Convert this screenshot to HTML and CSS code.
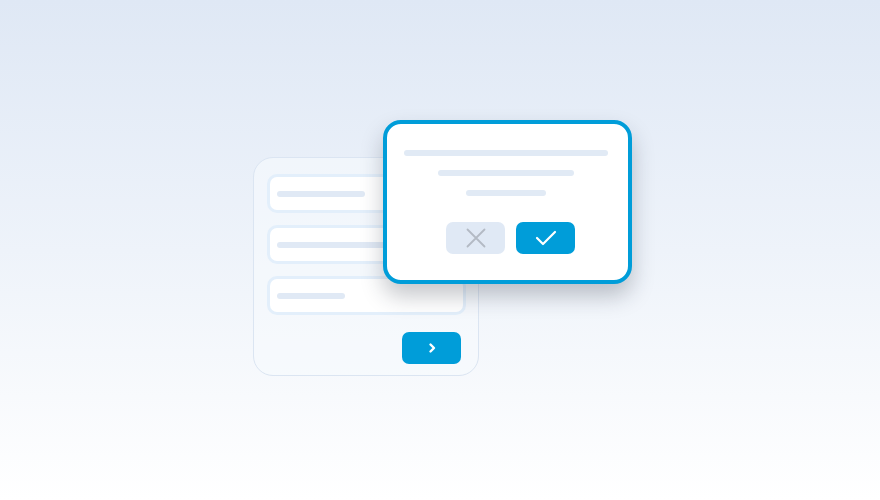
FILE: index.html
```html
<!DOCTYPE html>
<html>
<head>
<meta charset="utf-8">
<link rel="stylesheet" href="styles.css">
</head>
<body>
<div class="scene">
  <div class="form-card">
    <div class="field"><span class="bar bar-a"></span></div>
    <div class="field"><span class="bar bar-b"></span></div>
    <div class="field"><span class="bar bar-c"></span></div>
    <div class="actions">
      <div class="btn btn-primary">
        <svg width="10" height="12" viewBox="0 0 10 12"><path d="M3.5 2.5 L7 6 L3.5 9.5" fill="none" stroke="#fff" stroke-width="2.4" stroke-linecap="round" stroke-linejoin="round"/></svg>
      </div>
    </div>
  </div>
  <div class="dialog">
    <span class="line line-1"></span>
    <span class="line line-2"></span>
    <span class="line line-3"></span>
    <div class="dialog-buttons">
      <div class="btn btn-cancel">
        <svg width="20" height="20" viewBox="0 0 20 20"><path d="M1.5 1.5 L18.5 18.5 M18.5 1.5 L1.5 18.5" fill="none" stroke="#b3bac4" stroke-width="1.8" stroke-linecap="round"/></svg>
      </div>
      <div class="btn btn-primary">
        <svg width="22" height="16" viewBox="0 0 22 16"><path d="M2 8 L8 14 L20 2" fill="none" stroke="#fff" stroke-width="2.2" stroke-linecap="round" stroke-linejoin="round"/></svg>
      </div>
    </div>
  </div>
</div>
</body>
</html>
```

FILE: styles.css
```css
html, body {
  margin: 0;
  padding: 0;
}
body {
  width: 880px;
  height: 500px;
  overflow: hidden;
  background: linear-gradient(180deg, #dfe8f5 0%, #eef3fa 50%, #ffffff 100%);
  font-family: "Liberation Sans", Arial, sans-serif;
}
.scene {
  position: relative;
  margin: 157px 0 0 253px;
  width: 226px;
}
.form-card {
  box-sizing: border-box;
  width: 226px;
  height: 219px;
  border: 1.5px solid #dbe5f2;
  border-radius: 20px;
  background: rgba(247, 250, 254, 0.6);
  padding: 15.5px 12.5px 0 12.5px;
  display: flex;
  flex-direction: column;
  gap: 11.5px;
}
.field {
  box-sizing: border-box;
  height: 39.5px;
  border: 3.5px solid #e3effb;
  border-radius: 10px;
  background: #ffffff;
  display: flex;
  align-items: center;
  padding: 2px 0 0 7.5px;
}
.bar {
  display: block;
  height: 6px;
  border-radius: 3px;
  background: #e0e9f5;
}
.bar-a { width: 88px; }
.bar-b { width: 140px; }
.bar-c { width: 68px; }
.actions {
  display: flex;
  justify-content: flex-end;
  padding-right: 4.5px;
  margin-top: 5px;
}
.btn {
  width: 59px;
  height: 32px;
  border-radius: 7px;
  display: flex;
  align-items: center;
  justify-content: center;
}
.btn-primary { background: #009dd9; }
.btn-cancel { background: #e0e9f5; }
.dialog {
  position: absolute;
  left: 130px;
  top: -37px;
  box-sizing: border-box;
  width: 249px;
  height: 164px;
  border: 4px solid #009dd9;
  border-radius: 18px;
  background: #ffffff;
  box-shadow: 0 12px 22px rgba(30, 40, 55, 0.26);
  display: flex;
  flex-direction: column;
  align-items: center;
  padding-top: 26px;
}
.line {
  display: block;
  height: 6px;
  border-radius: 3px;
  background: #e1eaf5;
  margin-right: 3px;
}
.line-1 { width: 204px; }
.line-2 { width: 136px; margin-top: 14px; }
.line-3 { width: 80px; margin-top: 14px; }
.dialog-buttons {
  display: flex;
  gap: 11px;
  margin-top: 26px;
  margin-left: 6px;
}
```
